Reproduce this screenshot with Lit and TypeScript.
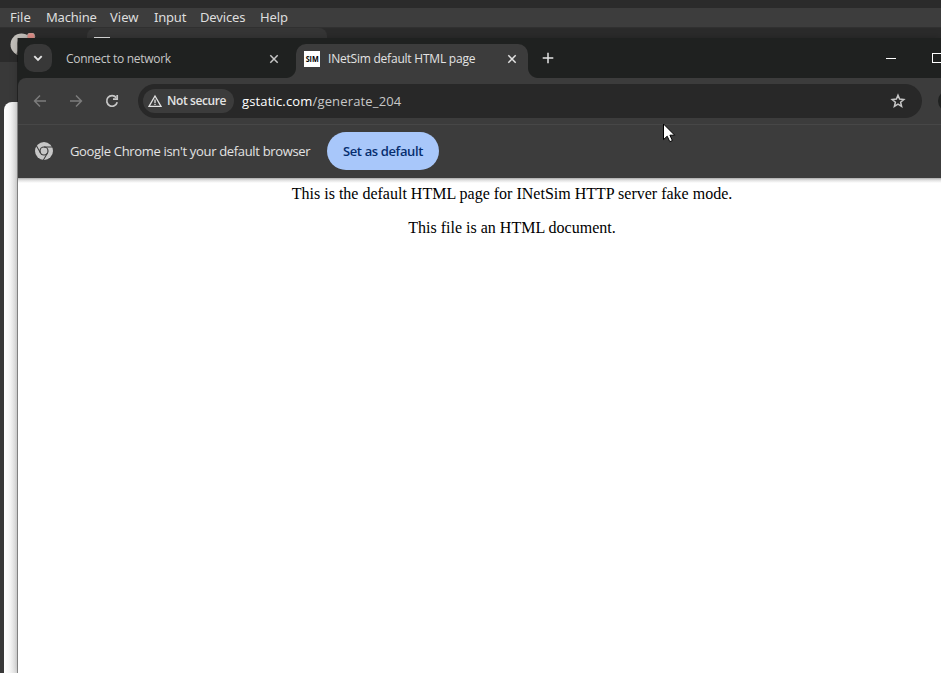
import { LitElement, html, css, svg } from "lit";
import { customElement } from "lit/decorators.js";

const stroke = (d: string, w = 1.6) =>
  svg`<path d=${d} fill="none" stroke="currentColor" stroke-width=${w}></path>`;

@customElement("desktop-backdrop")
export class DesktopBackdrop extends LitElement {
  static styles = css`
    :host { display: flex; flex-direction: column; height: 100%; background: #393939; }
    .title { height: 8px; background: #2b2b2b; flex: none; }
    .menu {
      height: 19px; flex: none; display: flex; align-items: center; gap: 14px;
      padding-left: 10px; background: #3d3d3d; color: #dedede;
      font: 13px/19px "Noto Sans", sans-serif;
    }
    .menu span { white-space: nowrap; }
    .file { width: 22px; }
    .machine { width: 50px; letter-spacing: -0.2px; }
    .view { width: 30px; }
    .input { width: 32px; letter-spacing: -0.2px; }
    .devices { width: 46px; letter-spacing: -0.15px; }
    .help { width: 28px; letter-spacing: -0.1px; }
    .tabs { height: 35px; flex: none; display: flex; background: #2b2b2b; border-top: 1px solid #303030; box-sizing: border-box; }
    .avatar { width: 26px; height: 26px; margin: 5px 0 0 10px; flex: none; }
    .tab { width: 240px; height: 30px; margin-left: 51px; border-radius: 8px 8px 0 0; background: #363636; }
    .mark { width: 16px; height: 2px; background: #e5e5e5; margin: 9px 0 0 7px; }
    .page { flex: 1; margin: 40px 0 0 4px; border-radius: 8px 0 0 0; background: linear-gradient(90deg, #fff 0, #f8f8f8 5px, #e9e9e9 10px, #d8d8d8 14px); }
  `;
  render() {
    return html`
      <div class="title"></div>
      <nav class="menu">
        ${["File", "Machine", "View", "Input", "Devices", "Help"].map(
          (m) => html`<span class=${m.toLowerCase()}>${m}</span>`
        )}
      </nav>
      <div class="tabs">
        <svg class="avatar" viewBox="0 0 26 26">
          <circle cx="11.5" cy="11.5" r="11" fill="#c4c1bc"></circle>
          <path d="M6 22Q8 18 7.5 14Q6 5 13 5h4v17z" fill="#6a6764"></path>
          <circle cx="21" cy="3.5" r="3.8" fill="#e08f88" stroke="#b5aaa5" stroke-width=".7"></circle>
        </svg>
        <div class="tab"><div class="mark"></div></div>
      </div>
      <div class="page"></div>
    `;
  }
}

@customElement("tab-strip")
export class TabStrip extends LitElement {
  static styles = css`
    :host {
      display: flex; height: 40px; flex: none; background: #1f2120; color: #e3e3e3;
      font: 12px/16px "Open Sans", sans-serif; white-space: nowrap;
    }
    svg { display: block; flex: none; }
    .search {
      width: 28px; height: 28px; margin: 6px 0 0 6px; border-radius: 10px; flex: none;
      background: #383838; display: grid; place-items: center;
    }
    .tab { display: flex; align-items: center; flex: none; height: 34px; margin-top: 6px; box-sizing: border-box; padding-bottom: 5px; }
    .idle { width: 234px; padding-left: 14px; color: #c7c7c7; }
    .idle .label { width: 203px; letter-spacing: -0.29px; }
    .foot { width: 10px; height: 10px; margin-top: 30px; flex: none; }
    .left { background: radial-gradient(circle at 0 0, transparent 9.5px, #3c3c3c 10.5px); }
    .right { background: radial-gradient(circle at 100% 0, transparent 9.5px, #3c3c3c 10.5px); }
    .active { width: 232px; border-radius: 10px 10px 0 0; background: #3c3c3c; padding-left: 8px; }
    .active .label { width: 179px; margin-left: 8px; letter-spacing: -0.22px; }
    .favicon {
      width: 16px; height: 16px; background: #fff; color: #000; flex: none; overflow: hidden;
      display: grid; place-items: center;
    }
    .favicon span { font: 700 9px/16px "Open Sans", sans-serif; transform: scaleX(0.8); }
    .plus { margin: 14px 0 0 4px; }
    .controls { margin-left: auto; display: flex; }
    .min { width: 10px; height: 1px; background: #fff; margin: 20px 36px 0 0; }
    .max { width: 10px; height: 10px; border: 1px solid #fff; border-right: 0; box-sizing: border-box; margin: 15px -1px 0 0; }
  `;
  render() {
    return html`
      <div class="search"><svg width="12" height="12" viewBox="0 0 12 12">${stroke("M2.3 4.2 6 7.9 9.7 4.2", 1.9)}</svg></div>
      <div class="tab idle">
        <span class="label">Connect to network</span>
        <svg width="10" height="10" viewBox="0 0 10 10">${stroke("M1.3 1.3 8.7 8.7M8.7 1.3 1.3 8.7", 1.5)}</svg>
      </div>
      <div class="foot left"></div>
      <div class="tab active">
        <div class="favicon"><span>SIM</span></div>
        <span class="label">INetSim default HTML page</span>
        <svg width="10" height="10" viewBox="0 0 10 10">${stroke("M1.3 1.3 8.7 8.7M8.7 1.3 1.3 8.7", 1.5)}</svg>
      </div>
      <div class="foot right"></div>
      <svg class="plus" width="12" height="12" viewBox="0 0 12 12">${stroke("M6 .7V11.3M.7 6H11.3", 1.5)}</svg>
      <div class="controls"><div class="min"></div><div class="max"></div></div>
    `;
  }
}

@customElement("address-bar")
export class AddressBar extends LitElement {
  static styles = css`
    :host {
      display: flex; align-items: center; height: 46px; flex: none; box-sizing: border-box;
      background: #3c3c3c; border-radius: 8px 0 0 0; padding-left: 14px; color: #c7c7c7;
      font: 13px/18px "Open Sans", sans-serif; white-space: nowrap;
    }
    svg { display: block; flex: none; }
    .nav { display: flex; gap: 20px; flex: none; }
    .off { color: #7c7c7c; }
    .omnibox {
      display: flex; align-items: center; width: 784px; height: 34px; margin-left: 18px; flex: none;
      border-radius: 17px; background: #282828; box-sizing: border-box; padding: 0 16px 0 5px;
    }
    .chip {
      display: flex; align-items: center; width: 91px; height: 24px; border-radius: 12px; flex: none;
      background: #3c3c3c; color: #e3e3e3; box-sizing: border-box; padding-left: 5px;
      font-size: 12px; font-weight: 600;
    }
    .chip span { margin-left: 5px; letter-spacing: -0.4px; }
    .url { margin-left: 8px; flex: 1; color: #c7c7c7; letter-spacing: 0.16px; }
    .host { color: #fff; }
    .profile { width: 34px; height: 22px; border-radius: 11px; background: #1f2120; margin-left: 16px; flex: none; }
  `;
  render() {
    return html`
      <div class="nav">
        <svg class="off" width="16" height="16" viewBox="0 0 16 16">${stroke("M14 8H3M8 2.5 2.6 8 8 13.5", 1.5)}</svg>
        <svg class="off" width="16" height="16" viewBox="0 0 16 16">${stroke("M2 8H13M8 2.5 13.4 8 8 13.5", 1.5)}</svg>
        <svg width="16" height="16" viewBox="0 0 16 16">
          ${stroke("M13.2 9.2A5.3 5.3 0 1 1 12.2 4.6", 1.7)}${stroke("M13.2 2V6.2H9", 1.7)}
        </svg>
      </div>
      <div class="omnibox">
        <div class="chip">
          <svg width="14" height="14" viewBox="0 0 14 14">
            ${stroke("M7 2 13 12.3H1Z", 1.3)}${stroke("M7 5.4V9M7 9.7V11", 1.3)}
          </svg>
          <span>Not secure</span>
        </div>
        <div class="url"><span class="host">gstatic.com</span>/generate_204</div>
        <svg width="16" height="16" viewBox="0 0 16 16">
          ${stroke("M8 2.3 9.6 6.1 13.8 6.5 10.6 9.2 11.6 13.3 8 11.1 4.4 13.3 5.4 9.2 2.2 6.5 6.4 6.1Z", 1.5)}
        </svg>
      </div>
      <div class="profile"></div>
    `;
  }
}

@customElement("default-browser-bar")
export class DefaultBrowserBar extends LitElement {
  static styles = css`
    :host {
      display: flex; align-items: center; height: 54px; flex: none; box-sizing: border-box;
      border-top: 1px solid #474747; background: #3c3c3c; padding: 0 0 1px 17px; color: #e3e3e3;
      font: 13px/18px "Open Sans", sans-serif; white-space: nowrap;
    }
    svg { display: block; flex: none; color: #c7c7c7; }
    .message { width: 241px; margin: 0 16px 0 17px; letter-spacing: -0.33px; }
    .button {
      width: 112px; height: 38px; border-radius: 19px; background: #a8c7fa; color: #062e6f;
      text-align: center; line-height: 38px; font-weight: 600; letter-spacing: -0.37px;
    }
  `;
  render() {
    return html`
      <svg width="18" height="18" viewBox="0 0 18 18">
        <circle cx="9" cy="9" r="9" fill="currentColor"></circle>
        <circle cx="9" cy="9" r="4.6" fill="#3c3c3c"></circle>
        <circle cx="9" cy="9" r="3.4" fill="currentColor"></circle>
        ${[0, 120, 240].map(
          (a) => svg`<path d="M9 5H17.6" transform=${`rotate(${a} 9 9)`} fill="none" stroke="#3c3c3c" stroke-width="1"></path>`
        )}
      </svg>
      <span class="message">Google Chrome isn't your default browser</span>
      <div class="button">Set as default</div>
    `;
  }
}

@customElement("app-root")
export class AppRoot extends LitElement {
  static styles = css`
    :host { display: block; position: relative; width: 941px; height: 673px; overflow: hidden; background: #393939; }
    .window {
      position: absolute; left: 18px; top: 38px; right: 0; bottom: 0;
      display: flex; flex-direction: column; background: #1f2120;
      box-shadow: 0 0 8px rgba(0, 0, 0, 0.22), -1px 0 0 rgba(0, 0, 0, 0.35);
    }
    .document {
      flex: 1; overflow: hidden; color: #000; text-align: center; padding: 7px 0 0 0;
      background: linear-gradient(#a9a9a9, #dedede 2px, #fff 5px);
      font: 16px/18px "Liberation Serif", serif;
    }
    .document p { margin: 0 0 16px; width: 988px; }
    .cursor { position: absolute; left: 663px; top: 123px; }
  `;
  render() {
    return html`
      <desktop-backdrop></desktop-backdrop>
      <div class="window">
        <tab-strip></tab-strip>
        <address-bar></address-bar>
        <default-browser-bar></default-browser-bar>
        <main class="document">
          <p>This is the default HTML page for INetSim HTTP server fake mode.</p>
          <p>This file is an HTML document.</p>
        </main>
      </div>
      <svg class="cursor" width="13" height="20" viewBox="0 0 13 20">
        <path d="M.5 1V16.6L4.2 13.2 6.8 18.7 9.4 17.5 6.9 12.2H11.7Z" fill="#fff" stroke="#000"></path>
      </svg>
    `;
  }
}
